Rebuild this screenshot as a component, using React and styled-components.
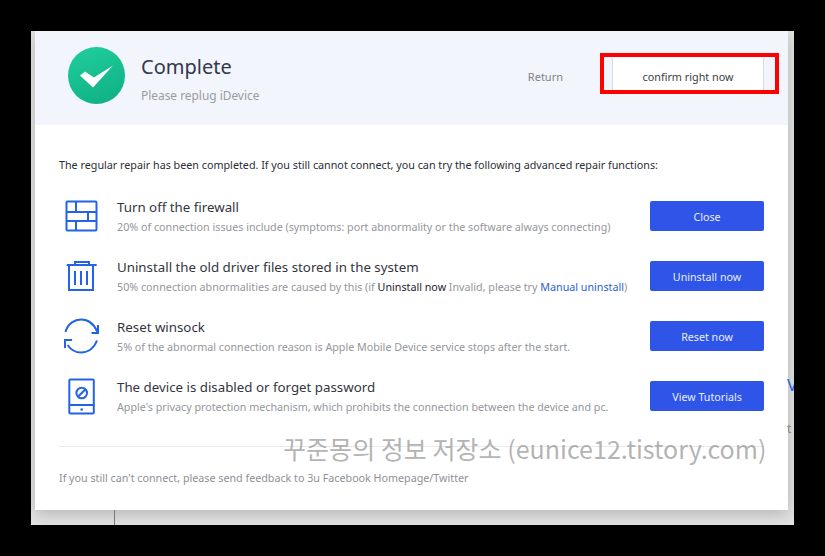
import React from 'react'
import styled, { createGlobalStyle } from 'styled-components'

const GlobalStyle = createGlobalStyle`
  html, body {
    margin: 0;
    background: #000;
    font-family: "Noto Sans", "Open Sans", sans-serif;
  }
`

const Page = styled.div`
  width: 825px;
  height: 556px;
  padding: 31px 31px 0;
  box-sizing: border-box;
  position: relative;
  overflow: hidden;
  background: #000;
`

const AppWindow = styled.div`
  position: relative;
  width: 763px;
  height: 494px;
  padding: 0 6px 0 4px;
  box-sizing: border-box;
  background: #e4e4e4;
  overflow: hidden;
`

const Dialog = styled.div`
  position: relative;
  height: 479px;
  background: #fff;
  box-shadow: 0 4px 16px rgba(0, 0, 0, 0.22);
  display: flex;
  flex-direction: column;
`

const Header = styled.header`
  height: 94px;
  flex: none;
  background: #f2f5fc;
  display: flex;
  align-items: center;
  padding: 0 24px 0 33px;
  box-sizing: border-box;
`

const Badge = styled.div`
  width: 57px;
  height: 57px;
  flex: none;
  margin-bottom: 5px;
  border-radius: 50%;
  background: linear-gradient(160deg, #20cf9b, #0fae83);
  display: flex;
  align-items: center;
  justify-content: center;
`

const HeadText = styled.div`
  margin-left: 16px;
  margin-bottom: 1px;
  flex: 1;
`

const HeadTitle = styled.div`
  font-size: 20px;
  line-height: 28px;
  color: #33384a;
`

const HeadSub = styled.div`
  margin-top: 6px;
  font-size: 11.9px;
  line-height: 16px;
  color: #9a9ca3;
`

const ReturnLink = styled.div`
  font-size: 11px;
  color: #7f8188;
  margin: 0 49px 4px 0;
`

const ConfirmButton = styled.div`
  width: 152px;
  height: 36px;
  margin-bottom: 4px;
  padding-top: 1px;
  box-sizing: border-box;
  background: #fff;
  border-left: 1px solid #d8dade;
  border-right: 1px solid #d8dade;
  display: flex;
  align-items: center;
  justify-content: center;
  font-size: 10.8px;
  color: #3b3d45;
`

const Content = styled.div`
  flex: 1;
  padding: 32px 24px 0;
  display: flex;
  flex-direction: column;
`

const Lead = styled.div`
  font-size: 10.75px;
  line-height: 16px;
  color: #2b2d36;
  white-space: nowrap;
`

const Rows = styled.div`
  margin-top: 27px;
  display: flex;
  flex-direction: column;
  gap: 28px;
`

const Row = styled.div`
  display: flex;
  align-items: center;
  height: 32px;
`

const IconSlot = styled.div`
  width: 46px;
  margin-left: 5px;
  margin-right: 7px;
  flex: none;
  display: flex;
  justify-content: flex-start;
`

const RowText = styled.div`
  flex: 1;
  min-width: 0;
`

const RowTitle = styled.div`
  font-size: 13.3px;
  line-height: 18px;
  color: #33353e;
  white-space: nowrap;
`

const RowDesc = styled.div`
  margin: 4px 0 -1px;
  font-size: 10.72px;
  line-height: 15px;
  color: #94969c;
  white-space: nowrap;
`

const Strong = styled.span`
  color: #23252d;
`

const Link = styled.span`
  color: #2c63d8;
`

const ActionButton = styled.div`
  width: 114px;
  height: 30px;
  padding-top: 1px;
  box-sizing: border-box;
  flex: none;
  border-radius: 2px;
  background: #2f55e8;
  color: #e9edff;
  font-size: 10.7px;
  display: flex;
  align-items: center;
  justify-content: center;
`

const Divider = styled.div`
  margin-top: 34px;
  height: 1px;
  background: #e9e9ec;
`

const Footer = styled.div`
  margin-top: 23px;
  font-size: 10.72px;
  line-height: 16px;
  color: #8e9096;
  white-space: nowrap;
`

const RedFrame = styled.div`
  position: absolute;
  left: 600px;
  top: 53px;
  width: 179px;
  height: 41px;
  box-sizing: border-box;
  border: 4px solid #f00;
`

const Watermark = styled.div`
  position: absolute;
  left: 283px;
  top: 431px;
  font-family: "Noto Sans CJK KR", "Noto Sans", sans-serif;
  font-size: 25.050px;
  line-height: 35px;
  color: rgba(150, 150, 150, 0.72);
  white-space: nowrap;
`

const BehindLetter = styled.div`
  position: absolute;
  left: 787px;
  top: ${p => p.$top}px;
  width: 7px;
  overflow: hidden;
  font-size: ${p => p.$size}px;
  line-height: 1;
  color: ${p => p.$color};
`

const BehindRule = styled.div`
  position: absolute;
  left: 114px;
  top: 510px;
  width: 1px;
  height: 15px;
  background: #77787c;
`

const stroke = { fill: 'none', stroke: '#2563e6', strokeWidth: 2 }

const CheckIcon = () => (
  <svg width="34" height="28" viewBox="0 0 34 28">
    <path d="M0 13.5 L5 9.5 L14 15.5 L33 3.5 L13 25.5 Z" fill="#fff" />
  </svg>
)

const WallIcon = () => (
  <svg width="34" height="32" viewBox="0 0 34 32" {...stroke}>
    <rect x="2.5" y="1.5" width="30" height="29" rx="1" />
    <path d="M2.5 12h30M2.5 21h30M12 1.5V12M24 12v9M12 21v9.5" />
  </svg>
)

const TrashIcon = () => (
  <svg width="36" height="32" viewBox="0 0 36 32" {...stroke}>
    <path d="M2.7 5h30M11 5V2h14v3M5 5v25h24V5M11 11v14M17 11v14M23 11v14" />
  </svg>
)

const RefreshIcon = () => (
  <svg width="36" height="36" viewBox="0 0 36 36" {...stroke}>
    <path d="M1.5 14C4 5 11 1.5 17 1.5c7 0 13 4.5 16.5 12.5" />
    <path d="M34 7v8h-6.5" />
    <path d="M33 22.5C30 30 24 34.5 17 34.5c-5.5 0-10-2.5-13.500-7.500" />
    <path d="M1 30v-8h7" />
  </svg>
)

const PhoneIcon = () => (
  <svg width="32" height="37" viewBox="0 0 32 37" {...stroke}>
    <rect x="5.300" y="1.500" width="24.500" height="34" rx="1" />
    <path d="M5.300 27h24.500" />
    <circle cx="17.700" cy="15" r="5.300" />
    <path d="M13.900 18.800l7.600-7.600" />
    <circle cx="17.700" cy="31.500" r="1.300" fill="#2563e6" stroke="none" />
  </svg>
)

const REPAIRS = [
  {
    icon: <WallIcon />,
    title: 'Turn off the firewall',
    desc: '20% of connection issues include (symptoms: port abnormality or the software always connecting)',
    action: 'Close',
  },
  {
    icon: <TrashIcon />,
    title: 'Uninstall the old driver files stored in the system',
    desc: (
      <>
        50% connection abnormalities are caused by this (if <Strong>Uninstall now</Strong> Invalid, please try{' '}
        <Link>Manual uninstall</Link>)
      </>
    ),
    action: 'Uninstall now',
  },
  {
    icon: <RefreshIcon />,
    title: 'Reset winsock',
    desc: '5% of the abnormal connection reason is Apple Mobile Device service stops after the start.',
    action: 'Reset now',
  },
  {
    icon: <PhoneIcon />,
    title: 'The device is disabled or forget password',
    desc: "Apple's privacy protection mechanism, which prohibits the connection between the device and pc.",
    action: 'View Tutorials',
  },
]

export default function App() {
  return (
    <Page>
      <GlobalStyle />
      <AppWindow>
        <Dialog>
          <Header>
            <Badge>
              <CheckIcon />
            </Badge>
            <HeadText>
              <HeadTitle>Complete</HeadTitle>
              <HeadSub>Please replug iDevice</HeadSub>
            </HeadText>
            <ReturnLink>Return</ReturnLink>
            <ConfirmButton>confirm right now</ConfirmButton>
          </Header>
          <Content>
            <Lead>
              The regular repair has been completed. If you still cannot connect, you can try the following advanced
              repair functions:
            </Lead>
            <Rows>
              {REPAIRS.map(item => (
                <Row key={item.action}>
                  <IconSlot>{item.icon}</IconSlot>
                  <RowText>
                    <RowTitle>{item.title}</RowTitle>
                    <RowDesc>{item.desc}</RowDesc>
                  </RowText>
                  <ActionButton>{item.action}</ActionButton>
                </Row>
              ))}
            </Rows>
            <Divider />
            <Footer>If you still can't connect, please send feedback to 3u Facebook Homepage/Twitter</Footer>
          </Content>
        </Dialog>
      </AppWindow>
      <BehindRule />
      <BehindLetter $top={376} $size={17} $color="#2563e6">V</BehindLetter>
      <BehindLetter $top={423} $size={12} $color="#8a8a80">t</BehindLetter>
      <RedFrame />
      <Watermark>꾸준몽의 정보 저장소 (eunice12.tistory.com)</Watermark>
    </Page>
  )
}
